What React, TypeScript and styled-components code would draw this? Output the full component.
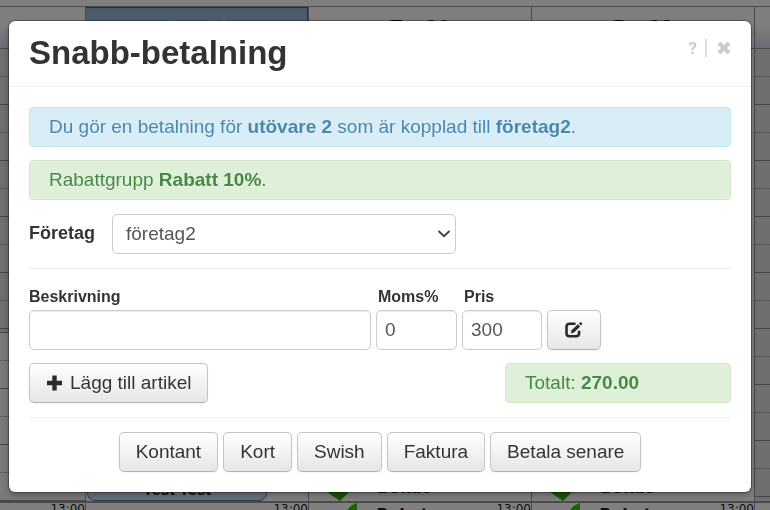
import React from "react";
import styled, { createGlobalStyle, css } from "styled-components";

const GlobalStyle = createGlobalStyle`
  *, *::before, *::after { box-sizing: border-box; }
  body {
    margin: 0;
    overflow: hidden;
    background: #fff;
    color: #333;
    font-family: "Liberation Sans", Arial, Helvetica, sans-serif;
    font-size: 19px;
    line-height: 26px;
  }
`;

/* ---------- calendar behind the dialog ---------- */

const Calendar = styled.div`
  display: flex;
  flex-direction: column;
  height: 100vh;
  padding-top: 6px;
  background: #fff;
`;

const columns = css`
  display: grid;
  grid-template-columns: 85px repeat(3, 1fr) 16px;
`;

const DayHeader = styled.div`
  ${columns}
  height: 43px;
  border-top: 1px solid #969696;
  border-bottom: 1px solid #969696;
`;

const Day = styled.div<{ $selected?: boolean; $edge?: boolean }>`
  padding-top: 10px;
  border-left: 1px solid #969696;
  text-align: center;
  font: bold 17px/20px "DejaVu Sans", sans-serif;
  color: #111;
  &:first-child { border-left: 0; }
  ${(p) => p.$edge && css`background: linear-gradient(#fff 40%, #d8dcec);`}
  ${(p) =>
    p.$selected &&
    css`
      background: linear-gradient(#94b4d0, #a4cbf0);
      box-shadow: inset 0 1px 0 #2c6c9c, inset -1px 0 0 #2c6c9c;
      color: #fff0d8;
    `}
`;

const DayBody = styled.div`
  ${columns}
  flex: 1;
  min-height: 0;
`;

const DayColumn = styled.div<{ $shaded?: boolean }>`
  display: flex;
  flex-direction: column;
  min-width: 0;
  overflow: hidden;
  border-left: 1px solid #969696;
  background: ${(p) => (p.$shaded ? "#dedede" : "#fff")};
  &:first-child { border-left: 0; }
`;

const Slot = styled.div<{ $half?: boolean }>`
  flex: 0 0 28px;
  border-bottom: 1px ${(p) => (p.$half ? "dotted" : "solid")} #8c8c8c;
`;

const OpenHours = styled.div`
  display: flex;
  flex: 1;
  flex-direction: column;
  min-height: 0;
  margin-top: 3px;
  border-top: 1px solid #8c8c8c;
  background: #f4f4f4;
`;

const BookingArea = styled.div`
  display: flex;
  flex: 1;
  flex-direction: column;
  justify-content: flex-end;
`;

const Booking = styled.div`
  width: 180px;
  height: 60px;
  margin-left: 1px;
  padding-top: 38px;
  border: 1px solid #3d83b8;
  border-radius: 0 0 8px 8px;
  background: #d4e4f0;
  color: #222;
  text-align: center;
  font-size: 16px;
  font-weight: bold;
  line-height: 20px;
`;

const Free = styled.div`
  display: flex;
  align-items: flex-end;
  gap: 26px;
  padding-left: 18px;
  font: bold 16px/20px "DejaVu Sans", sans-serif;
  color: #111;
  span { padding-bottom: 3px; }
`;

const HourRow = styled.div`
  ${columns}
  height: 9px;
  overflow: hidden;
  border-top: 2px solid #969696;
`;

const Hour = styled.div`
  display: flex;
  justify-content: flex-end;
  gap: 18px;
  border-left: 1px solid #969696;
  color: #222;
  font: 12px/13px "DejaVu Sans", sans-serif;
  &:first-child { border-left: 0; }
  strong { margin-right: 50px; font-size: 16px; line-height: 24px; }
`;

const slots = Array.from({ length: 16 }, (_, i) => i);

const Check = () => (
  <svg width="24" height="16" viewBox="0 0 24 16" aria-hidden="true">
    <path d="M0 7L6 3L11 7L18 0L24 5L13 16Z" fill="#2fae06" />
  </svg>
);

const CheckTop = () => (
  <svg width="12" height="9" viewBox="0 0 12 9" aria-hidden="true">
    <path d="M11 0V9H0Q4 2 11 0Z" fill="#34c808" />
  </svg>
);

/* ---------- dialog ---------- */

const Backdrop = styled.div`
  position: fixed;
  inset: 0;
  padding: 21px 19px 18px 9px;
  background: rgba(0, 0, 0, 0.5);
`;

const Modal = styled.section`
  border-radius: 6px;
  background: #fff;
  box-shadow: 0 0 0 1px rgba(0, 0, 0, 0.3), 0 3px 7px rgba(0, 0, 0, 0.3);
`;

const ModalHeader = styled.header`
  display: flex;
  justify-content: space-between;
  align-items: flex-start;
  padding: 12px 20px 13px;
  border-bottom: 1px solid #eee;
`;

const Title = styled.h1`
  margin: 0;
  font-size: 33px;
  line-height: 40px;
`;

const HeaderTools = styled.div`
  display: flex;
  align-items: center;
  height: 18px;
  margin-top: 6px;
`;

const HeaderButton = styled.button`
  display: flex;
  align-items: center;
  padding: 0;
  border: 0;
  background: none;
  color: #ccc;
  font: bold 17px/20px Roboto, sans-serif;
  cursor: pointer;
`;

const Divider = styled.span`
  width: 2px;
  height: 18px;
  margin: 0 10px 0 8px;
  background: #ddd;
`;

const ModalBody = styled.form`
  padding: 20px;
`;

const Alert = styled.div<{ $tone: "info" | "success" }>`
  padding: 6px 19px;
  border: 1px solid;
  border-radius: 4px;
  text-shadow: 0 1px 0 rgba(255, 255, 255, 0.5);
  ${(p) =>
    p.$tone === "info"
      ? css`background: #d9edf7; border-color: #bce8f1; color: #4788b0;`
      : css`background: #dff0d8; border-color: #d6e9c6; color: #468847;`}
`;

const Stack = styled.div`
  display: grid;
  gap: 13px;
`;

const CompanyRow = styled.div`
  display: grid;
  grid-template-columns: 83px 344fr 275fr;
  margin-top: 14px;
  label {
    font-size: 18px;
    font-weight: bold;
    line-height: 38px;
  }
`;

const SelectWrap = styled.div`
  display: grid;
  align-items: center;
  select, svg { grid-area: 1 / 1; }
  svg { justify-self: end; margin-right: 5px; pointer-events: none; }
`;

const Select = styled.select`
  width: 100%;
  height: 40px;
  padding: 0 30px 1px 13px;
  border: 1px solid #ccc;
  border-radius: 5px;
  appearance: none;
  background: #fff;
  color: #555;
  font: inherit;
`;

const Rule = styled.hr`
  height: 1px;
  margin: 14px 0;
  border: 0;
  background: #eee;
`;

const ArticleRow = styled.div`
  display: grid;
  grid-template-columns: 342fr 81px 80px 54px 125fr;
  align-items: end;
  gap: 5px;
  margin-top: 18px;
`;

const Field = styled.label<{ $indent?: boolean }>`
  display: grid;
  gap: 3px;
  font-size: 16px;
  font-weight: bold;
  line-height: 20px;
  span { padding-left: ${(p) => (p.$indent ? 2 : 0)}px; }
`;

const Input = styled.input`
  width: 100%;
  height: 40px;
  padding: 0 8px 1px;
  border: 1px solid #ccc;
  border-radius: 5px;
  box-shadow: inset 0 1px 1px rgba(0, 0, 0, 0.075);
  color: #555;
  font: 19px/26px "Liberation Sans", Arial, sans-serif;
`;

const Button = styled.button`
  display: inline-flex;
  align-items: center;
  justify-content: center;
  gap: 7px;
  height: 40px;
  padding: 0 16px;
  border: 1px solid #c5c5c5;
  border-bottom-color: #b3b3b3;
  border-radius: 5px;
  background: linear-gradient(#fff, #e6e6e6);
  box-shadow: inset 0 1px 0 rgba(255, 255, 255, 0.2), 0 1px 2px rgba(0, 0, 0, 0.05);
  color: #333;
  font: inherit;
  white-space: nowrap;
  text-shadow: 0 1px 1px rgba(255, 255, 255, 0.75);
  cursor: pointer;
`;

const TotalRow = styled.div`
  display: flex;
  justify-content: space-between;
  margin-top: 13px;
`;

const Total = styled(Alert)`
  flex: 0 1 226px;
`;

const Payments = styled.div`
  display: flex;
  justify-content: center;
  gap: 5px;
`;

const payments = ["Kontant", "Kort", "Swish", "Faktura", "Betala senare"];

export default function App() {
  return (
    <>
      <GlobalStyle />
      <Calendar aria-hidden="true">
        <DayHeader>
          <Day $edge />
          <Day $selected>Ons 19</Day>
          <Day>Tor 20</Day>
          <Day>Fre 21</Day>
          <Day $edge />
        </DayHeader>
        <DayBody>
          <DayColumn $shaded>
            {slots.slice(0, 10).map((i) => <Slot key={i} $half={i % 2 === 0} />)}
            <OpenHours>
              {slots.slice(0, 6).map((i) => <Slot key={i} $half={i % 2 === 0} />)}
            </OpenHours>
          </DayColumn>
          <DayColumn>
            <BookingArea><Booking>Test Test</Booking></BookingArea>
          </DayColumn>
          <DayColumn>
            <BookingArea><Free><Check /><span>Bokat</span></Free></BookingArea>
          </DayColumn>
          <DayColumn>
            <BookingArea><Free><Check /><span>Bokat</span></Free></BookingArea>
          </DayColumn>
          <DayColumn $shaded>
            {slots.map((i) => <Slot key={i} $half={i % 2 === 0} />)}
          </DayColumn>
        </DayBody>
        <HourRow>
          <Hour>13:00</Hour>
          <Hour>13:00</Hour>
          <Hour><CheckTop /><strong>Bokat</strong>13:00</Hour>
          <Hour><CheckTop /><strong>Bokat</strong>13:00</Hour>
          <Hour />
        </HourRow>
      </Calendar>

      <Backdrop>
        <Modal role="dialog" aria-modal="true" aria-labelledby="title">
          <ModalHeader>
            <Title id="title">Snabb-betalning</Title>
            <HeaderTools>
              <HeaderButton type="button" aria-label="Hjälp">?</HeaderButton>
              <Divider />
              <HeaderButton type="button" aria-label="Stäng">
                <svg width="14" height="14" viewBox="0 0 14 14">
                  <path d="M2 2L12 12M12 2L2 12" stroke="#ccc" strokeWidth="4.2" />
                </svg>
              </HeaderButton>
            </HeaderTools>
          </ModalHeader>
          <ModalBody onSubmit={(e) => e.preventDefault()}>
            <Stack>
              <Alert $tone="info">
                Du gör en betalning för <strong>utövare 2</strong> som är kopplad till{" "}
                <strong>företag2</strong>.
              </Alert>
              <Alert $tone="success">
                Rabattgrupp <strong>Rabatt 10%</strong>.
              </Alert>
            </Stack>
            <CompanyRow>
              <label htmlFor="company">Företag</label>
              <SelectWrap>
                <Select id="company" defaultValue="företag2">
                  <option>företag2</option>
                </Select>
                <svg width="14" height="10" viewBox="0 0 14 10" aria-hidden="true">
                  <path d="M1.5 2L7 7.2L12.5 2" fill="none" stroke="#444" strokeWidth="2" />
                </svg>
              </SelectWrap>
            </CompanyRow>
            <Rule />
            <ArticleRow>
              <Field><span>Beskrivning</span><Input type="text" /></Field>
              <Field $indent><span>Moms%</span><Input type="text" defaultValue="0" /></Field>
              <Field $indent><span>Pris</span><Input type="text" defaultValue="300" /></Field>
              <Button type="button" aria-label="Redigera">
                <svg width="18" height="16" viewBox="0 0 18 16">
                  <path
                    d="M10.5 1.7H4.6Q1.5 1.7 1.5 4.8V11.2Q1.5 14.3 4.6 14.3H11Q14.1 14.3 14.1 11.2V8.8"
                    fill="none"
                    stroke="#2b2b2b"
                    strokeWidth="2.6"
                  />
                  <path d="M5.8 11.5L6.6 8.2L12.9 2.3L15.2 4.6L9 10.6Z" fill="#2b2b2b" />
                  <path d="M13.9 1.5L15.1 0.4Q15.9 0 16.8 0.8Q17.6 1.7 17 2.4L16 3.6Z" fill="#2b2b2b" />
                </svg>
              </Button>
            </ArticleRow>
            <TotalRow>
              <Button type="button">
                <svg width="17" height="16" viewBox="0 0 17 16" aria-hidden="true">
                  <path d="M8.5 0.5V15.5M1 8H16" stroke="#2b2b2b" strokeWidth="4.4" />
                </svg>
                Lägg till artikel
              </Button>
              <Total $tone="success">
                Totalt: <strong>270.00</strong>
              </Total>
            </TotalRow>
            <Rule />
            <Payments>
              {payments.map((name) => <Button key={name} type="button">{name}</Button>)}
            </Payments>
          </ModalBody>
        </Modal>
      </Backdrop>
    </>
  );
}
